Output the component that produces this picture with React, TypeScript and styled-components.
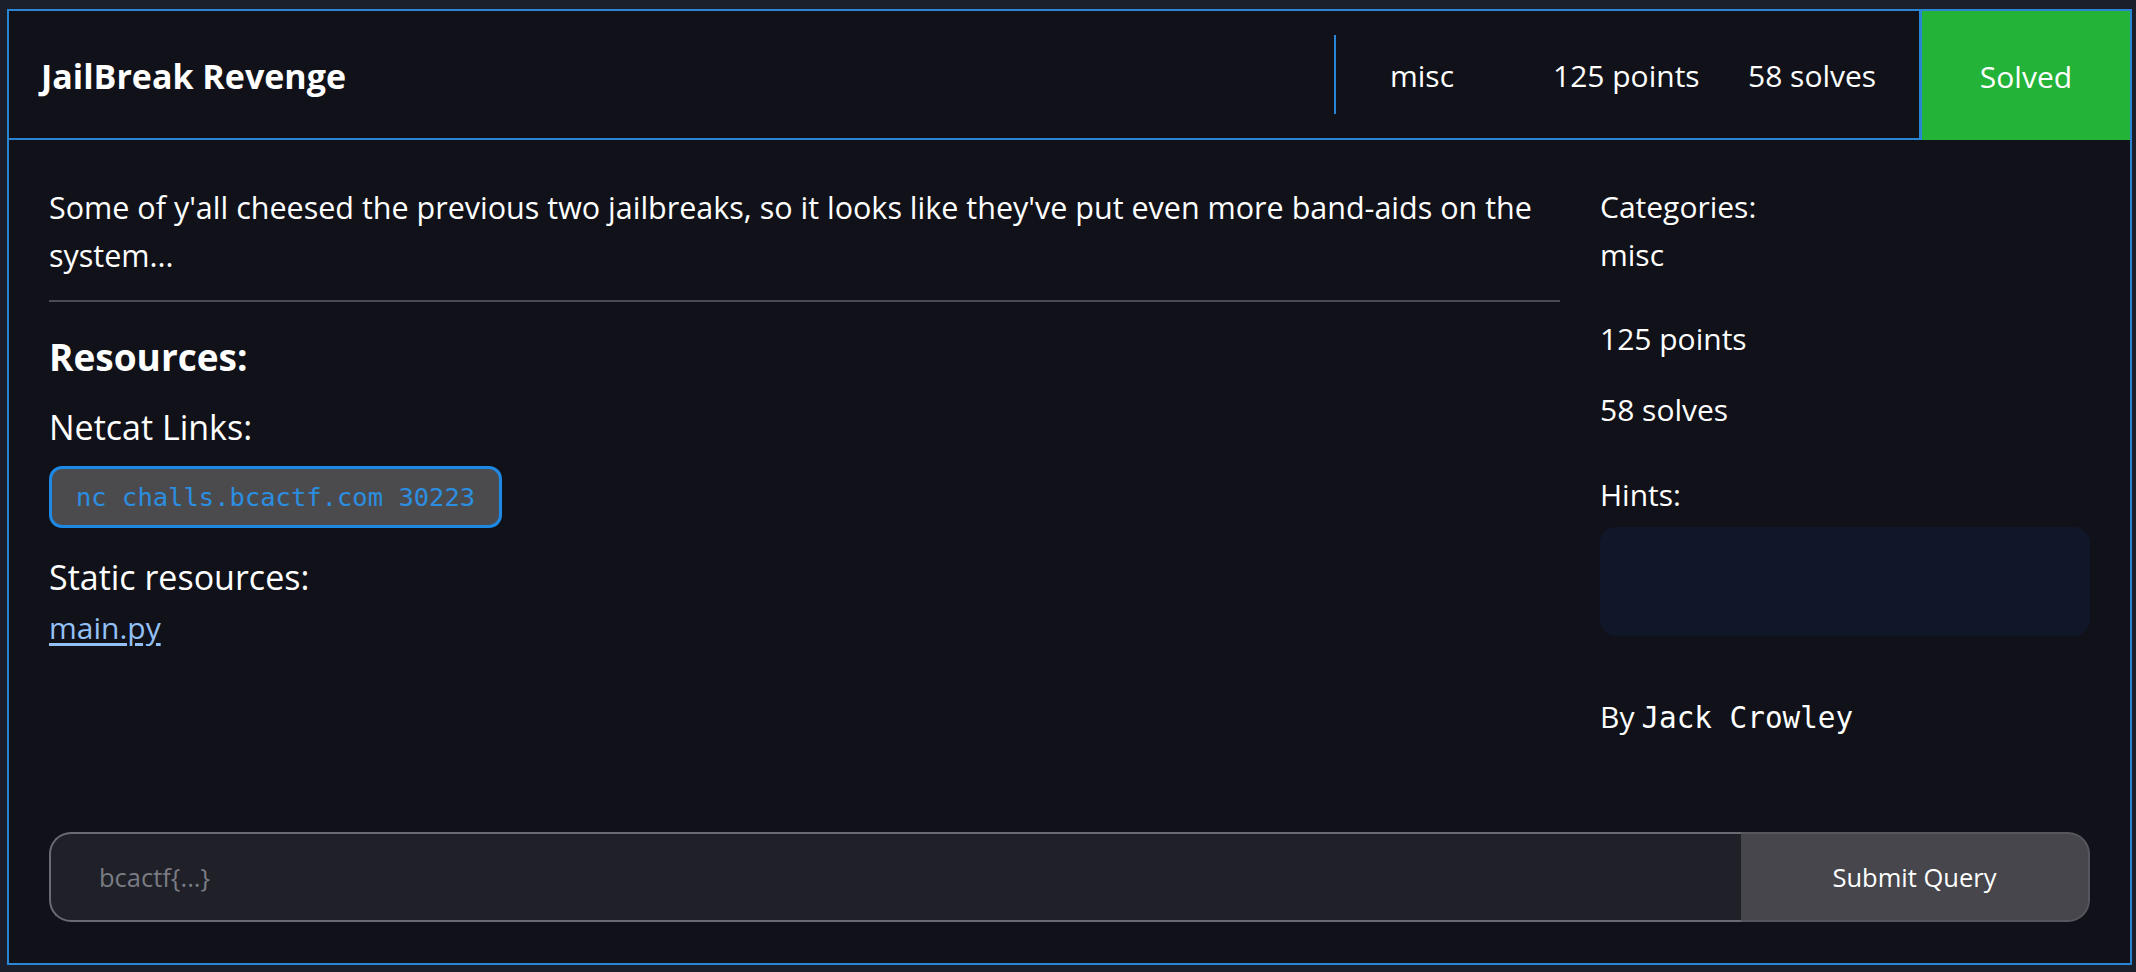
import React from "react";
import styled, { createGlobalStyle } from "styled-components";

const GlobalStyle = createGlobalStyle`
  html, body {
    margin: 0;
    padding: 0;
    background: #1b1f2c;
  }
  body {
    font-family: "Open Sans", "Noto Sans", "Liberation Sans", sans-serif;
    color: #ffffff;
  }
  * { box-sizing: border-box; }
`;

const Page = styled.div`
  padding: 9px 4px 7px 7px;
  min-height: 972px;
`;

const Card = styled.section`
  border: 2px solid #2a85d5;
  background: #111219;
  height: 956px;
  display: flex;
  flex-direction: column;
`;

const Header = styled.header`
  display: flex;
  align-items: stretch;
  height: 129px;
  border-bottom: 2px solid #2a85d5;
`;

const Title = styled.h1`
  flex: 1;
  margin: 0;
  padding: 2px 0 0 32px;
  display: flex;
  align-items: center;
  font-size: 34px;
  font-weight: 700;
`;

const Divider = styled.div`
  width: 2px;
  align-self: center;
  height: 79px;
  background: #2a85d5;
  margin-right: 54px;
`;

const Stat = styled.div<{ $width: number }>`
  width: ${(p) => p.$width}px;
  display: flex;
  align-items: center;
  padding-top: 2px;
  font-size: 30px;
  white-space: nowrap;
`;

const SolvedBadge = styled.div`
  width: 211px;
  margin-bottom: -2px;
  padding-top: 2px;
  background: #23b339;
  border-left: 3px solid #2a85d5;
  display: flex;
  align-items: center;
  justify-content: center;
  font-size: 30px;
`;

const Body = styled.div`
  display: grid;
  grid-template-columns: 1fr 490px;
  column-gap: 40px;
  padding: 43px 40px 0 40px;
`;

const Main = styled.div`
  display: flex;
  flex-direction: column;
  align-items: flex-start;
`;

const Description = styled.p`
  margin: 0;
  font-size: 30.5px;
  line-height: 48px;
`;

const Rule = styled.hr`
  align-self: stretch;
  margin: 21px 0 0 0;
  border: none;
  height: 2px;
  background: #4a4b53;
`;

const SectionTitle = styled.h2`
  margin: 28px 0 0 0;
  font-size: 37px;
  line-height: 54px;
  font-weight: 700;
`;

const SubTitle = styled.h3<{ $top: number }>`
  margin: ${(p) => p.$top}px 0 0 0;
  font-size: 34px;
  line-height: 50px;
  font-weight: 400;
`;

const NetcatBox = styled.code`
  margin-top: 14px;
  height: 62px;
  display: inline-flex;
  align-items: center;
  padding: 0 24px;
  border: 3.5px solid #1e88e5;
  border-radius: 13px;
  background: #4b4b4d;
  color: #2c8ee0;
  font-family: "DejaVu Sans Mono", "Liberation Mono", monospace;
  font-size: 25.5px;
`;

const FileLink = styled.a`
  margin-top: 2px;
  font-size: 30px;
  line-height: 48px;
  color: #93c0f5;
  text-decoration: underline;
  text-underline-offset: 4px;
`;

const Side = styled.aside`
  display: flex;
  flex-direction: column;
`;

const SideText = styled.p<{ $top?: number }>`
  margin: ${(p) => p.$top ?? 0}px 0 0 0;
  font-size: 30px;
  line-height: 48px;
`;

const HintBox = styled.div`
  margin-top: 8px;
  height: 109px;
  border-radius: 16px;
  background: #0f1729;
`;

const Author = styled.p`
  margin: 57px 0 0 0;
  font-size: 30px;
  line-height: 48px;
  display: flex;
  align-items: baseline;
  gap: 7px;
`;

const AuthorName = styled.span`
  font-family: "DejaVu Sans Mono", "Liberation Mono", monospace;
  font-size: 29.3px;
`;

const FlagForm = styled.form`
  margin: auto 40px 41px 40px;
  display: flex;
  height: 90px;
`;

const FlagInput = styled.input`
  flex: 1;
  min-width: 0;
  height: 100%;
  background: #1f2028;
  border: 2px solid #6a6a72;
  border-right: none;
  border-radius: 22px 0 0 22px;
  padding: 0 48px;
  font-family: "Open Sans", "Noto Sans", sans-serif;
  font-size: 25.5px;
  color: #ffffff;
  outline: none;
  &::placeholder {
    color: #7a7c84;
  }
`;

const SubmitButton = styled.button`
  width: 349px;
  height: 100%;
  background: #46464c;
  border: 2px solid #55565e;
  border-left: none;
  border-radius: 0 22px 22px 0;
  color: #ffffff;
  font-family: "Open Sans", "Noto Sans", sans-serif;
  font-size: 25.5px;
  cursor: pointer;
`;

export default function App() {
  return (
    <>
      <GlobalStyle />
      <Page>
        <Card>
          <Header>
            <Title>JailBreak Revenge</Title>
            <Divider />
            <Stat $width={163}>misc</Stat>
            <Stat $width={195}>125 points</Stat>
            <Stat $width={171}>58 solves</Stat>
            <SolvedBadge>Solved</SolvedBadge>
          </Header>
          <Body>
            <Main>
              <Description>
                Some of y'all cheesed the previous two jailbreaks, so it looks like they've put even more band-aids on the system...
              </Description>
              <Rule />
              <SectionTitle>Resources:</SectionTitle>
              <SubTitle $top={18}>Netcat Links:</SubTitle>
              <NetcatBox>nc challs.bcactf.com 30223</NetcatBox>
              <SubTitle $top={24}>Static resources:</SubTitle>
              <FileLink href="#">main.py</FileLink>
            </Main>
            <Side>
              <SideText>Categories:</SideText>
              <SideText>misc</SideText>
              <SideText $top={36}>125 points</SideText>
              <SideText $top={23}>58 solves</SideText>
              <SideText $top={37}>Hints:</SideText>
              <HintBox />
              <Author>
                By<AuthorName>Jack Crowley</AuthorName>
              </Author>
            </Side>
          </Body>
          <FlagForm onSubmit={(e) => e.preventDefault()}>
            <FlagInput placeholder="bcactf{...}" />
            <SubmitButton type="submit">Submit Query</SubmitButton>
          </FlagForm>
        </Card>
      </Page>
    </>
  );
}
